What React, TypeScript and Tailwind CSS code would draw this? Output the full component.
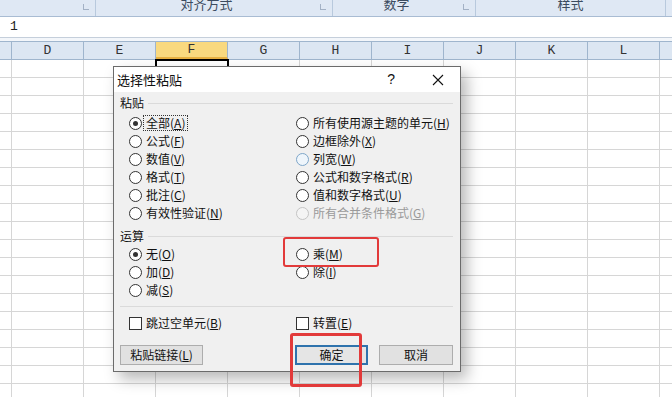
import React from 'react';

const cols = ['D', 'E', 'F', 'G', 'H', 'I', 'J', 'K', 'L', ''];
const rows = Array.from({ length: 19 }, (_, i) => i);

function Radio({ checked = false, disabled = false, hover = false }: { checked?: boolean; disabled?: boolean; hover?: boolean }) {
  const ring = disabled
    ? 'border-[#c4c4c4] bg-[#f4f4f4]'
    : hover
    ? 'border-[#7ea6c9] bg-[#eef5fb]'
    : 'border-[#333333] bg-white';
  return (
    <span className={`w-[13px] h-[13px] rounded-full border flex items-center justify-center shrink-0 ${ring}`}>
      {checked && <span className="w-[5px] h-[5px] rounded-full bg-[#333333]" />}
    </span>
  );
}

function Opt({
  label,
  k,
  checked,
  disabled,
  hover,
  focus,
}: {
  label: string;
  k: string;
  checked?: boolean;
  disabled?: boolean;
  hover?: boolean;
  focus?: boolean;
}) {
  return (
    <div className="h-[18px] flex items-center">
      <Radio checked={checked} disabled={disabled} hover={hover} />
      <span
        className={`ml-[2px] px-[2px] leading-[14px] ${disabled ? 'text-[#9a9a9a]' : 'text-[#111]'} ${
          focus ? 'outline outline-1 outline-dotted outline-[#333]' : ''
        }`}
      >
        {label}(<span className="underline">{k}</span>)
      </span>
    </div>
  );
}

function Check({ label, k }: { label: string; k: string }) {
  return (
    <div className="h-[18px] flex items-center">
      <span className="w-[13px] h-[13px] border border-[#333333] bg-white shrink-0" />
      <span className="ml-[4px] text-[#111]">
        {label}(<span className="underline">{k}</span>)
      </span>
    </div>
  );
}

function Section({ title }: { title: string }) {
  return (
    <div className="h-[16px] flex items-center">
      <span className="text-[#111]">{title}</span>
      <span className="flex-1 h-px bg-[#dadada] ml-[4px]" />
    </div>
  );
}

export default function App() {
  return (
    <div className="relative w-[672px] h-[397px] overflow-hidden bg-white font-['Noto_Sans_CJK_SC',sans-serif]">
      {/* ribbon group labels */}
      <div className="h-[17px] flex bg-[#dfe8f4] border-b border-[#a9bcd3] text-[13px] text-[#3b4b60] overflow-hidden">
        <div className="w-[96px] border-r border-[#b8c9dd] relative">
          <span className="absolute right-[6px] top-[4px] w-[6px] h-[6px] border-l border-b border-[#8a9bb2] opacity-70" />
        </div>
        <div className="w-[237px] border-r border-[#b8c9dd] relative flex justify-center pr-[15px]">
          <span className="-mt-[5px] leading-[18px]">对齐方式</span>
          <span className="absolute right-[6px] top-[4px] w-[6px] h-[6px] border-l border-b border-[#8a9bb2] opacity-70" />
        </div>
        <div className="w-[143px] border-r border-[#b8c9dd] relative flex justify-center pr-[15px]">
          <span className="-mt-[5px] leading-[18px]">数字</span>
          <span className="absolute right-[6px] top-[4px] w-[6px] h-[6px] border-l border-b border-[#8a9bb2] opacity-70" />
        </div>
        <div className="w-[190px] border-r border-[#b8c9dd] flex justify-center">
          <span className="-mt-[5px] leading-[18px]">样式</span>
        </div>
      </div>

      {/* formula bar */}
      <div className="h-[21px] border-b border-[#c5cfdb] flex items-center pl-[10px] text-[13px] text-[#222] font-['Liberation_Mono',monospace]">
        1
      </div>
      <div className="h-[3px] bg-[#f3f6fa]" />

      {/* column headers */}
      <div className="h-[19px] flex bg-[#dce6f2] border-y border-[#9fb5cd] text-[13px] text-[#333] font-['Liberation_Mono',monospace]">
        <div className="w-[12px] shrink-0 border-r border-[#9fb5cd]" />
        {cols.map((c) => (
          <div
            key={c || 'm'}
            className={`w-[72px] shrink-0 border-r border-[#9fb5cd] flex items-center justify-center ${
              c === 'F' ? 'bg-[#f9d97f] border-b-2 border-b-[#e9b243]' : ''
            }`}
          >
            {c}
          </div>
        ))}
      </div>

      {/* grid */}
      <div className="flex flex-col">
        {rows.map((r) => (
          <div key={r} className="h-[18px] flex">
            <div className="w-[12px] shrink-0 border-r border-b border-[#d6d6d6]" />
            {cols.map((c) => (
              <div key={c || 'm'} className="w-[72px] shrink-0 border-r border-b border-[#d6d6d6]" />
            ))}
          </div>
        ))}
      </div>

      {/* active cell */}
      <div className="absolute left-[155px] top-[59px] w-[74px] h-[20px] border-2 border-black" />

      {/* dialog */}
      <div className="absolute left-[113px] top-[66px] w-[348px] h-[306px] border border-[#6b6b6b] bg-[#f0f0f0] shadow-[6px_7px_14px_rgba(0,0,0,0.28)] text-[12px] flex flex-col">
        <div className="h-[25px] bg-white flex items-center pl-[3px] text-[13px] text-[#111]">
          <span>选择性粘贴</span>
          <span className="ml-auto mr-[37px] text-[14px] font-['Liberation_Sans',sans-serif]">?</span>
          <svg width="12" height="12" viewBox="0 0 12 12" className="mr-[16px]">
            <path d="M1 1L11 11M11 1L1 11" stroke="#111" strokeWidth="1.1" />
          </svg>
        </div>
        <div className="flex-1 pl-[6px] pr-[7px] pt-[3px]">
          <Section title="粘贴" />
          <div className="mt-[3px] pl-[9px] grid grid-cols-[167px_1fr]">
            <div>
              <Opt label="全部" k="A" checked focus />
              <Opt label="公式" k="F" />
              <Opt label="数值" k="V" />
              <Opt label="格式" k="T" />
              <Opt label="批注" k="C" />
              <Opt label="有效性验证" k="N" />
            </div>
            <div>
              <Opt label="所有使用源主题的单元" k="H" />
              <Opt label="边框除外" k="X" />
              <Opt label="列宽" k="W" hover />
              <Opt label="公式和数字格式" k="R" />
              <Opt label="值和数字格式" k="U" />
              <Opt label="所有合并条件格式" k="G" disabled />
            </div>
          </div>
          <div className="mt-[6px]">
            <Section title="运算" />
          </div>
          <div className="mt-[1px] pl-[9px] grid grid-cols-[167px_1fr]">
            <div>
              <Opt label="无" k="O" checked />
              <Opt label="加" k="D" />
              <Opt label="减" k="S" />
            </div>
            <div>
              <Opt label="乘" k="M" />
              <Opt label="除" k="I" />
            </div>
          </div>
          <div className="mt-[7px] h-px bg-[#dadada]" />
          <div className="mt-[7px] pl-[9px] grid grid-cols-[167px_1fr]">
            <Check label="跳过空单元" k="B" />
            <Check label="转置" k="E" />
          </div>
          <div className="mt-[13px] flex">
            <button className="w-[83px] h-[20px] bg-[#e1e1e1] border border-[#adadad] text-[#111] leading-none">
              粘贴链接(<span className="underline">L</span>)
            </button>
            <button className="ml-[92px] w-[73px] h-[20px] bg-[#e5e5e5] border-2 border-[#2f73ad] text-[#111] leading-none">
              确定
            </button>
            <button className="ml-[11px] w-[74px] h-[20px] bg-[#e1e1e1] border border-[#adadad] text-[#111] leading-none">
              取消
            </button>
          </div>
        </div>
      </div>

      {/* red annotation boxes */}
      <div className="absolute left-[283px] top-[237px] w-[96px] h-[30px] border-2 border-[#e23a3a] rounded-[3px]" />
      <div className="absolute left-[290px] top-[333px] w-[72px] h-[54px] border-[3px] border-[#e23a3a] rounded-[3px]" />
    </div>
  );
}
